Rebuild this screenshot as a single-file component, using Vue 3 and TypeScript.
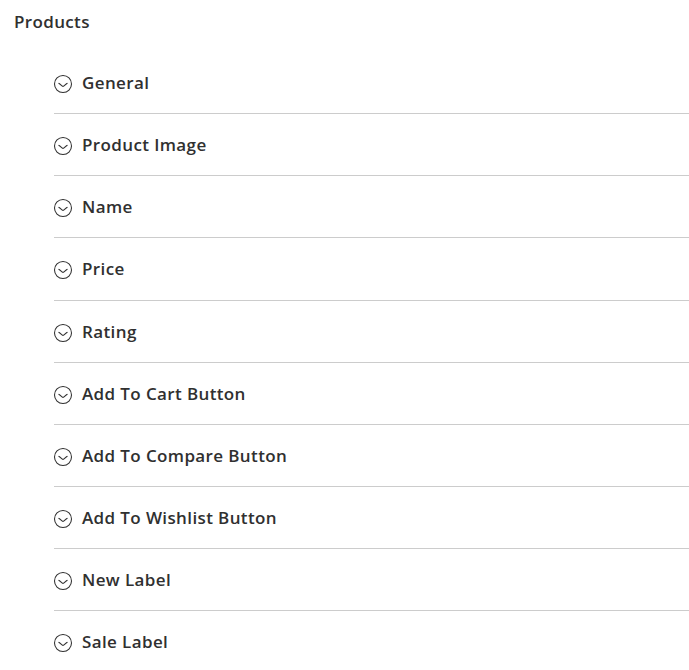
<script setup lang="ts">
const sections: string[] = [
  'General', 'Product Image', 'Name', 'Price', 'Rating', 'Add To Cart Button',
  'Add To Compare Button', 'Add To Wishlist Button', 'New Label', 'Sale Label',
]
</script>

<template>
  <main class="page">
    <h1 class="title">Products</h1>
    <ul class="list">
      <li v-for="s in sections" :key="s" class="row">
        <svg class="icon" viewBox="0 0 20 20" width="20" height="20">
          <circle cx="10" cy="10" r="8.5" />
          <path d="M5.5 9.3L6.5 9.8L9.3 12.1Q10 12.6 10.7 12.1L13.5 9.8L14.5 9.3" />
        </svg>
        <span>{{ s }}</span>
      </li>
    </ul>
  </main>
</template>

<style>
body { margin: 0; background: #fff; }
</style>

<style scoped>
.page {
  height: 670px;
  overflow: hidden;
  font-family: "Open Sans", sans-serif;
  font-weight: 600;
  color: #303030;
}
.title {
  margin: 0;
  padding: 10px 0 0 14px;
  font-size: 17px;
  line-height: 24px;
  font-weight: 600;
  letter-spacing: 0.35px;
}
.list { list-style: none; margin: 18.15px 0 0 54px; padding: 0; }
.row {
  display: flex;
  align-items: center;
  box-sizing: border-box;
  height: 62.1px;
  border-bottom: 1px solid #ccc;
  font-size: 17px;
  letter-spacing: 0.38px;
}
.icon { margin: 2.9px 9px 0 -1px; fill: none; stroke: #303030; stroke-width: 1.05; }
</style>
